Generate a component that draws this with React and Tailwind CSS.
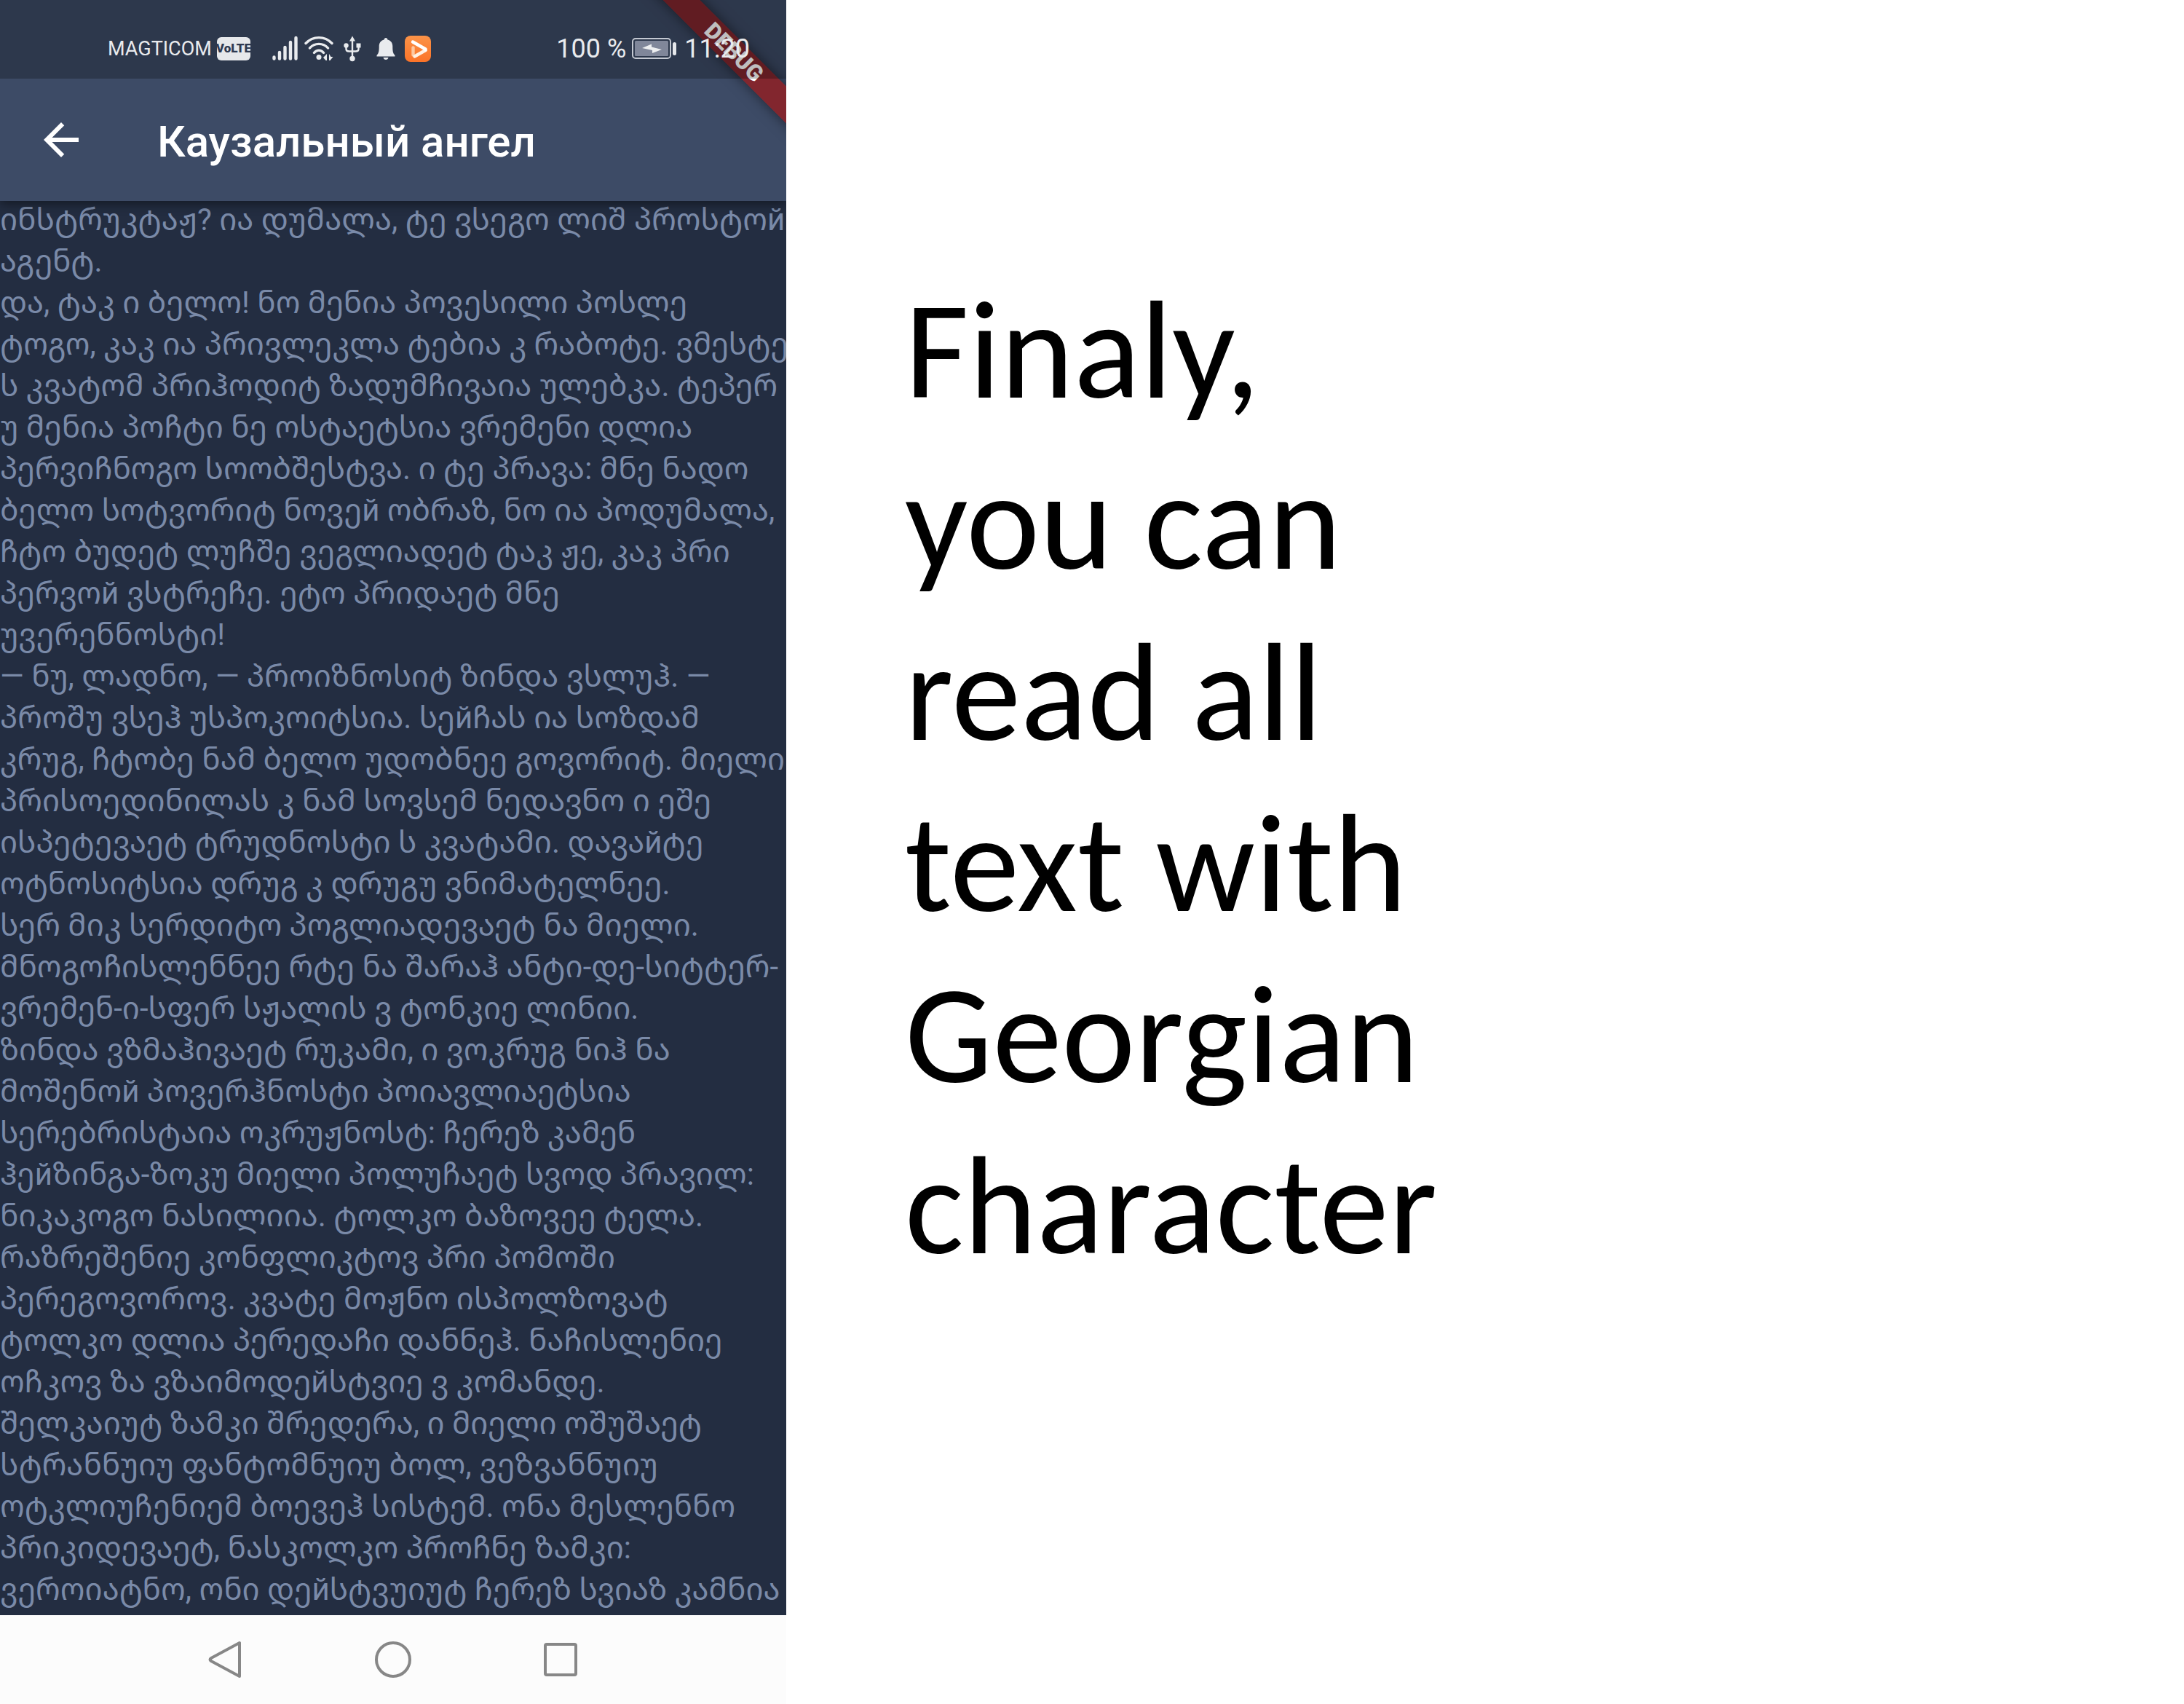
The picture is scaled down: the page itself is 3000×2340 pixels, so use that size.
const bookLines = [
  "ინსტრუკტაჟ? ია დუმალა, ტე ვსეგო ლიშ პროსტოй",
  "აგენტ.",
  "და, ტაკ ი ბელო! ნო მენია პოვესილი პოსლე",
  "ტოგო, კაკ ია პრივლეკლა ტებია კ რაბოტე. ვმესტე",
  "ს კვატომ პრიჰოდიტ ზადუმჩივაია ულებკა. ტეპერ",
  "უ მენია პოჩტი ნე ოსტაეტსია ვრემენი დლია",
  "პერვიჩნოგო სოობშესტვა. ი ტე პრავა: მნე ნადო",
  "ბელო სოტვორიტ ნოვეй ობრაზ, ნო ია პოდუმალა,",
  "ჩტო ბუდეტ ლუჩშე ვეგლიადეტ ტაკ ჟე, კაკ პრი",
  "პერვოй ვსტრეჩე. ეტო პრიდაეტ მნე",
  "უვერენნოსტი!",
  "— ნუ, ლადნო, — პროიზნოსიტ ზინდა ვსლუჰ. —",
  "პროშუ ვსეჰ უსპოკოიტსია. სეйჩას ია სოზდამ",
  "კრუგ, ჩტობე ნამ ბელო უდობნეე გოვორიტ. მიელი",
  "პრისოედინილას კ ნამ სოვსემ ნედავნო ი ეშე",
  "ისპეტევაეტ ტრუდნოსტი ს კვატამი. დავაйტე",
  "ოტნოსიტსია დრუგ კ დრუგუ ვნიმატელნეე.",
  "სერ მიკ სერდიტო პოგლიადევაეტ ნა მიელი.",
  "მნოგოჩისლენნეე რტე ნა შარაჰ ანტი-დე-სიტტერ-",
  "ვრემენ-ი-სფერ სჟალის ვ ტონკიე ლინიი.",
  "ზინდა ვზმაჰივაეტ რუკამი, ი ვოკრუგ ნიჰ ნა",
  "მოშენოй პოვერჰნოსტი პოიავლიაეტსია",
  "სერებრისტაია ოკრუჟნოსტ: ჩერეზ კამენ",
  "ჰეйზინგა-ზოკუ მიელი პოლუჩაეტ სვოდ პრავილ:",
  "ნიკაკოგო ნასილიია. ტოლკო ბაზოვეე ტელა.",
  "რაზრეშენიე კონფლიკტოვ პრი პომოში",
  "პერეგოვოროვ. კვატე მოჟნო ისპოლზოვატ",
  "ტოლკო დლია პერედაჩი დანნეჰ. ნაჩისლენიე",
  "ოჩკოვ ზა ვზაიმოდეйსტვიე ვ კომანდე.",
  "შელკაიუტ ზამკი შრედერა, ი მიელი ოშუშაეტ",
  "სტრანნუიუ ფანტომნუიუ ბოლ, ვეზვანნუიუ",
  "ოტკლიუჩენიემ ბოევეჰ სისტემ. ონა მესლენნო",
  "პრიკიდევაეტ, ნასკოლკო პროჩნე ზამკი:",
  "ვეროიატნო, ონი დეйსტვუიუტ ჩერეზ სვიაზ კამნია",
];

function SignalIcon() {
  return (
    <svg className="h-9 w-9" viewBox="0 0 36 36" stroke="currentColor" strokeWidth="4.4" strokeLinecap="round">
      <path d="M2.5 29.5v2M10 23v8.5M17.5 16v15.5M25 9v22.5M32.5 3v28.5" />
    </svg>
  );
}

function WifiIcon() {
  return (
    <svg className="h-9 w-10" viewBox="0 0 40 36" fill="none" stroke="currentColor" strokeWidth="3.4" strokeLinecap="round">
      <path d="M2 10.500C12 0 28 0 38 10.500M7.500 17C14 9.500 26 9.500 32.500 17M13.500 23.500C17 19 23 19 26.500 23.500" />
      <circle cx="20" cy="29.500" r="3.500" fill="currentColor" stroke="none" />
      <path d="M31 25v9h-1.500l-3.500-4zM34 25v9h1.500l4-5h-3z" fill="currentColor" stroke="none" />
    </svg>
  );
}

function UsbIcon() {
  return (
    <svg className="h-9 w-6" viewBox="0 0 24 36" fill="none" stroke="currentColor" strokeWidth="2.400">
      <path d="M12 6v26M3.500 14v4.500q0 3 4 3h9q4 0 4-3V14" />
      <path d="M12 0.500l4 7H8z" fill="currentColor" stroke="none" />
      <circle cx="3.500" cy="13.500" r="3.200" fill="currentColor" stroke="none" />
      <path d="M17.500 10.500h6v6h-6z" fill="currentColor" stroke="none" />
      <circle cx="12" cy="31.500" r="3.700" fill="currentColor" stroke="none" />
    </svg>
  );
}

function BellIcon() {
  return (
    <svg className="h-9 w-7" viewBox="0 0 28 36" fill="currentColor">
      <path d="M14 3c1.400 0 2.300 1 2.400 2.400C21 6.500 23.300 10 23.300 14.500c0 6 .2 9.500 3.200 12.500v1.500h-25V27c3-3 3.200-6.500 3.200-12.500 0-4.500 2.300-8 6.900-9.100C11.700 4 12.600 3 14 3zM10.500 30h7c-.4 2-1.700 3-3.500 3s-3.100-1-3.500-3z" />
    </svg>
  );
}

function PlayAppIcon() {
  return (
    <svg className="h-9 w-9" viewBox="0 0 36 36" fill="none" strokeLinecap="round" strokeLinejoin="round" strokeWidth="4.400">
      <defs>
        <linearGradient id="appBg" x1="0" y1="0" x2="0" y2="1">
          <stop offset="0" stopColor="#fb9348" />
          <stop offset="1" stopColor="#fb7328" />
        </linearGradient>
      </defs>
      <rect width="36" height="36" rx="8" fill="url(#appBg)" />
      <path d="M11.500 16.500v10" stroke="#fdc8a0" />
      <path d="M13.500 28.500L28.500 20" stroke="#fff1e4" />
      <path d="M11 8.500L28.500 18.500v1" stroke="#ffffff" />
    </svg>
  );
}

function BatteryIcon() {
  return (
    <svg className="h-8 w-[62px]" viewBox="0 0 62 32" fill="none">
      <rect x="1" y="2" width="52" height="27" rx="4" stroke="#c3c8d1" strokeWidth="2" />
      <rect x="4" y="5" width="46" height="21" rx="1.500" fill="#80879a" />
      <path d="M14 15l13-5.500v4l14 3.500-13 5v-4z" fill="#eceef0" />
      <rect x="56" y="7" width="5" height="18" rx="2.500" fill="#e6e8eb" />
    </svg>
  );
}

function StatusBar() {
  return (
    <div className="relative z-20 flex h-[108px] items-center justify-between bg-black/25 pt-[26px] pr-[50px] pl-[148px] font-[Roboto,sans-serif] text-[#e9ebee]">
      <div className="flex items-center">
        <span className="text-[27px] leading-9">MAGTICOM</span>
        <span className="ml-[7px] flex h-8 w-[46px] items-center justify-center rounded-md bg-[#e6e8eb] text-[17px] font-black text-[#2e3950]">
          VoLTE
        </span>
        <span className="ml-[30px] flex items-center">
          <SignalIcon />
          <span className="ml-2 flex"><WifiIcon /></span>
          <span className="ml-3.5 flex"><UsbIcon /></span>
          <span className="ml-5 flex"><BellIcon /></span>
          <span className="ml-3 flex"><PlayAppIcon /></span>
        </span>
      </div>
      <div className="flex items-center text-4xl leading-9">
        <span>100 %</span>
        <span className="mr-2.5 ml-2 flex"><BatteryIcon /></span>
        <span>11:20</span>
      </div>
    </div>
  );
}

function DebugBanner() {
  return (
    <div className="pointer-events-none absolute top-0 right-0 z-10 h-[276px] w-[276px] overflow-hidden">
      <div className="absolute top-[54px] -right-[78px] flex h-9 w-[300px] rotate-45 items-center justify-center bg-[#a01717]/70 font-[Roboto,sans-serif] text-[31px] font-black text-white shadow-[0_0_18px_rgba(0,0,0,0.5)]">
        DEBUG
      </div>
    </div>
  );
}

function Phone() {
  return (
    <section className="flex min-h-screen w-[36%] shrink-0 flex-col overflow-hidden bg-[#232d41]">
      <header className="relative z-10 bg-[#3d4b66] shadow-[0_4px_14px_rgba(0,0,0,0.45)]">
        <StatusBar />
        <div className="flex h-[168px] items-center pl-[60px]">
          <button type="button" aria-label="Back" className="text-white">
            <svg className="h-12 w-12" viewBox="4 4 16 16" fill="currentColor">
              <path d="M20 11H7.830l5.590-5.590L12 4l-8 8 8 8 1.410-1.410L7.830 13H20v-2z" />
            </svg>
          </button>
          <h1 className="ml-[108px] pt-1.5 font-[Roboto,sans-serif] text-[60px] leading-[70px] font-medium text-white">
            Каузальный ангел
          </h1>
        </div>
        <DebugBanner />
      </header>
      <main className="flex-1 font-[Roboto,'Noto_Sans_Georgian','DejaVu_Sans',sans-serif] text-[42px] leading-[51px] text-[#7a8aa8]">
        {bookLines.map((line) => (
          <p key={line} className="h-[57px] whitespace-nowrap">{line}</p>
        ))}
      </main>
      <nav className="flex h-[122px] items-center justify-between bg-[#fcfcfc] px-[286px] text-[#878787]">
        <button type="button" aria-label="Back">
          <svg className="h-[52px] w-12" viewBox="0 0 48 52" fill="none" stroke="currentColor" strokeWidth="4" strokeLinejoin="round">
            <path d="M43 3v46L4 28q-3-2 0-4z" />
          </svg>
        </button>
        <button type="button" aria-label="Home">
          <svg className="h-[52px] w-[52px]" viewBox="0 0 52 52" fill="none" stroke="currentColor" strokeWidth="4">
            <circle cx="26" cy="26" r="23" />
          </svg>
        </button>
        <button type="button" aria-label="Recent apps">
          <svg className="h-12 w-12" viewBox="0 0 48 48" fill="none" stroke="currentColor" strokeWidth="4">
            <rect x="3" y="3" width="42" height="42" rx="2" />
          </svg>
        </button>
      </nav>
    </section>
  );
}

export default function App() {
  return (
    <div className="flex min-h-screen bg-white">
      <Phone />
      <section className="flex-1 pt-[363px] pl-[163px]">
        <p className="max-w-[780px] font-[Carlito,'Open_Sans',sans-serif] text-[191px] leading-[235px] text-black">
          Finaly, you can read all text with Georgian character
        </p>
      </section>
    </div>
  );
}
